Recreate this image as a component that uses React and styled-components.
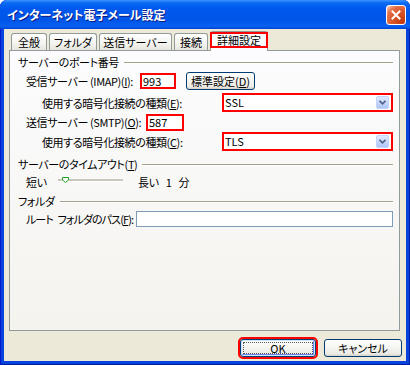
import React from 'react';
import styled, { createGlobalStyle } from 'styled-components';

const Global = createGlobalStyle`
  html, body { margin: 0; padding: 0; background: #ffffff; }
  body {
    font-family: "Noto Sans CJK JP", "Noto Sans", sans-serif;
    font-size: 11px;
    font-feature-settings: "palt" 1;
    color: #000;
  }
`;

const Window = styled.div`
  width: 410px;
  height: 365px;
  display: flex;
  flex-direction: column;
  background: #0842dd;
  border-radius: 7px 7px 0 0;
  overflow: hidden;
  box-shadow: inset 1px 0 0 #0019cf, inset -1px 0 0 #001ea0, inset 0 -1px 0 #001ea0;
`;

const TitleBar = styled.div`
  height: 29px;
  flex: none;
  display: flex;
  align-items: center;
  justify-content: space-between;
  padding: 0 4px 0 7px;
  background: linear-gradient(180deg, #3d95ff 0%, #0a6af2 10%, #0058ee 30%, #0055e8 70%, #0861f0 90%, #0044d6 100%);
`;

const Title = styled.span`
  color: #fff;
  font-weight: bold;
  font-size: 12px;
  text-shadow: 1px 1px 0 #0a1883;
  line-height: 1;
`;

const CloseBtn = styled.div`
  width: 20px;
  height: 20px;
  box-sizing: border-box;
  border: 1px solid #fff;
  border-radius: 3px;
  background: radial-gradient(circle at 85% 85%, #c43a0c 0%, #db5a2c 50%, #e4714a 72%, #f5b79f 92%, #fff 100%);
  display: flex;
  align-items: center;
  justify-content: center;
`;

const Body = styled.div`
  flex: 1;
  margin: 0 4px 4px 4px;
  background: #ece9d8;
  padding: 2px 6px 0 5px;
  display: flex;
  flex-direction: column;
`;

const TabRow = styled.div`
  display: flex;
  align-items: flex-end;
  gap: 2px;
  height: 19px;
  padding-left: 2px;
  position: relative;
  z-index: 1;
`;

const Tab = styled.div`
  position: relative;
  box-sizing: border-box;
  width: ${p => p.$w}px;
  height: ${p => (p.$active ? 20 : 17)}px;
  margin-bottom: ${p => (p.$active ? -1 : 0)}px;
  border: 1px solid #919b9c;
  border-bottom: none;
  border-radius: 3px 3px 0 0;
  background: ${p => (p.$active ? '#fcfcfe' : 'linear-gradient(180deg, #ffffff 0%, #f3f3ef 60%, #e6e5dd 100%)')};
  display: flex;
  justify-content: center;
  align-items: ${p => (p.$active ? 'flex-start' : 'center')};
  padding-top: ${p => (p.$active ? 1 : 0)}px;
  line-height: 14px;
  white-space: nowrap;
`;

const Mark = styled.span`
  position: absolute;
  top: 0;
  left: -1px;
  right: -1px;
  height: 16px;
  border: 2px solid #ff0000;
  box-sizing: border-box;
`;

const Panel = styled.div`
  flex: none;
  height: 281px;
  box-sizing: border-box;
  border: 1px solid #919b9c;
  background: linear-gradient(180deg, #fcfcfe 0%, #f4f3ee 100%);
  padding: 4px 6px 0 8px;
  display: flex;
  flex-direction: column;
  letter-spacing: -0.4px;
`;

const GroupHeader = styled.div`
  display: flex;
  align-items: center;
  height: 14px;
  margin-top: ${p => p.$mt || 0}px;
  white-space: nowrap;
  &::after {
    content: '';
    flex: 1;
    margin-left: 5px;
    height: 1px;
    background: #a3a08e;
    box-shadow: 0 1px 0 #fff;
  }
`;

const Row = styled.div`
  display: flex;
  align-items: center;
  height: ${p => p.$h}px;
  margin-top: ${p => p.$mt}px;
  padding-left: ${p => p.$indent}px;
  white-space: nowrap;
`;

const Label = styled.span`
  flex: none;
  width: ${p => p.$w}px;
  letter-spacing: ${p => (p.$tight ? '-0.9px' : 'inherit')};
  word-spacing: ${p => (p.$tight ? '3px' : 'normal')};
`;

const TextBox = styled.div`
  box-sizing: border-box;
  flex: ${p => (p.$w ? 'none' : '1')};
  width: ${p => (p.$w ? `${p.$w}px` : 'auto')};
  height: ${p => p.$h}px;
  background: #fff;
  border: ${p => (p.$red ? '2px solid #ff0000' : '1px solid #7f9db9')};
  padding-left: 1px;
  display: flex;
  align-items: center;
  line-height: 1;
  letter-spacing: 0;
`;

const Button = styled.div`
  box-sizing: border-box;
  flex: none;
  width: ${p => p.$w}px;
  height: 18px;
  margin-left: ${p => p.$ml || 0}px;
  border: 1px solid #003c74;
  border-radius: 3px;
  background: linear-gradient(180deg, #ffffff 0%, #f4f4f0 50%, #ecebe6 85%, #d6d0c5 100%);
  display: flex;
  align-items: center;
  justify-content: center;
  line-height: 1;
  letter-spacing: 0;
  ${p =>
    p.$default &&
    `
    outline: 2px solid #ff0000;
    box-shadow: inset 0 0 0 1px #cee7ff, inset -1px -1px 0 1px #6982ee;
  `}
`;

const Focus = styled.span`
  flex: 1;
  align-self: stretch;
  margin: 2px;
  border: 1px dotted #555;
  display: flex;
  align-items: center;
  justify-content: center;
`;

const Select = styled.div`
  box-sizing: border-box;
  width: 171px;
  height: 19px;
  border: 2px solid #ff0000;
  background: #fff;
  display: flex;
  align-items: center;
  justify-content: space-between;
  padding: 0 2px 0 1px;
  line-height: 1;
  letter-spacing: 0;
`;

const Arrow = styled.div`
  width: 13px;
  height: 13px;
  box-sizing: border-box;
  border-radius: 2px;
  border: 1px solid #c3d3fd;
  background: linear-gradient(180deg, #e0e9fe 0%, #c3d4fb 60%, #b0c6f5 100%);
  display: flex;
  align-items: center;
  justify-content: center;
`;

const Slider = styled.div`
  flex: none;
  width: 65px;
  height: 16px;
  position: relative;
  display: flex;
  align-items: center;
`;

const Track = styled.div`
  flex: 1;
  height: 2px;
  margin-top: -3px;
  background: #c9c8bd;
  border-bottom: 1px solid #fff;
`;

const Thumb = styled.svg`
  position: absolute;
  left: 4px;
  top: 3px;
`;

const Long = styled.span`
  margin-left: 15px;
  word-spacing: 5px;
`;

const Footer = styled.div`
  display: flex;
  justify-content: flex-end;
  gap: 8px;
  padding-top: 8px;
  margin-right: -2px;
`;

const U = styled.span`
  text-decoration: underline;
`;

const tabs = [
  { label: '全般', w: 36 },
  { label: 'フォルダ', w: 48 },
  { label: '送信サーバー', w: 73 },
  { label: '接続', w: 34 },
  { label: '詳細設定', w: 58, active: true },
];

const DropArrow = () => (
  <Arrow>
    <svg width="7" height="5" viewBox="0 0 7 5">
      <path d="M0.5 0.8 L3.5 3.8 L6.5 0.8" fill="none" stroke="#4d6185" strokeWidth="1.6" />
    </svg>
  </Arrow>
);

export default function App() {
  return (
    <>
      <Global />
      <Window>
        <TitleBar>
          <Title>インターネット電子メール設定</Title>
          <CloseBtn>
            <svg width="10" height="10" viewBox="0 0 10 10">
              <path d="M1.5 1.5 L8.5 8.5 M8.5 1.5 L1.5 8.5" stroke="#fff" strokeWidth="2" strokeLinecap="square" />
            </svg>
          </CloseBtn>
        </TitleBar>
        <Body>
          <TabRow>
            {tabs.map(t => (
              <Tab key={t.label} $w={t.w} $active={t.active}>
                {t.active && <Mark />}
                {t.label}
              </Tab>
            ))}
          </TabRow>
          <Panel>
            <GroupHeader>サーバーのポート番号</GroupHeader>
            <Row $h={18} $mt={3} $indent={8}>
              <Label $w={114}>受信サーバー (IMAP)(<U>I</U>):</Label>
              <TextBox $w={36} $h={16} $red>993</TextBox>
              <Button $w={69} $ml={10}>標準設定(<U>D</U>)</Button>
            </Row>
            <Row $h={19} $mt={3} $indent={24}>
              <Label $w={180}>使用する暗号化接続の種類(<U>E</U>):</Label>
              <Select>
                SSL
                <DropArrow />
              </Select>
            </Row>
            <Row $h={18} $mt={1} $indent={8}>
              <Label $w={120}>送信サーバー (SMTP)(<U>O</U>):</Label>
              <TextBox $w={38} $h={17} $red>587</TextBox>
            </Row>
            <Row $h={19} $mt={1} $indent={24}>
              <Label $w={180}>使用する暗号化接続の種類(<U>C</U>):</Label>
              <Select>
                TLS
                <DropArrow />
              </Select>
            </Row>
            <GroupHeader $mt={6}>サーバーのタイムアウト(<U>T</U>)</GroupHeader>
            <Row $h={16} $mt={3} $indent={8}>
              <Label $w={32}>短い</Label>
              <Slider>
                <Track />
                <Thumb width="7" height="6" viewBox="0 0 7 6">
                  <path d="M0.5 0.5 H6.5 V3 L3.5 5.5 L0.5 3 Z" fill="#fff" stroke="#21a121" strokeWidth="1" />
                </Thumb>
              </Slider>
              <Long>長い 1 分</Long>
            </Row>
            <GroupHeader $mt={4}>フォルダ</GroupHeader>
            <Row $h={16} $mt={3} $indent={8}>
              <Label $w={110} $tight>ルート フォルダのパス(<U>F</U>):</Label>
              <TextBox $h={16} />
            </Row>
          </Panel>
          <Footer>
            <Button $w={76} $default>
              <Focus>OK</Focus>
            </Button>
            <Button $w={78}>キャンセル</Button>
          </Footer>
        </Body>
      </Window>
    </>
  );
}
